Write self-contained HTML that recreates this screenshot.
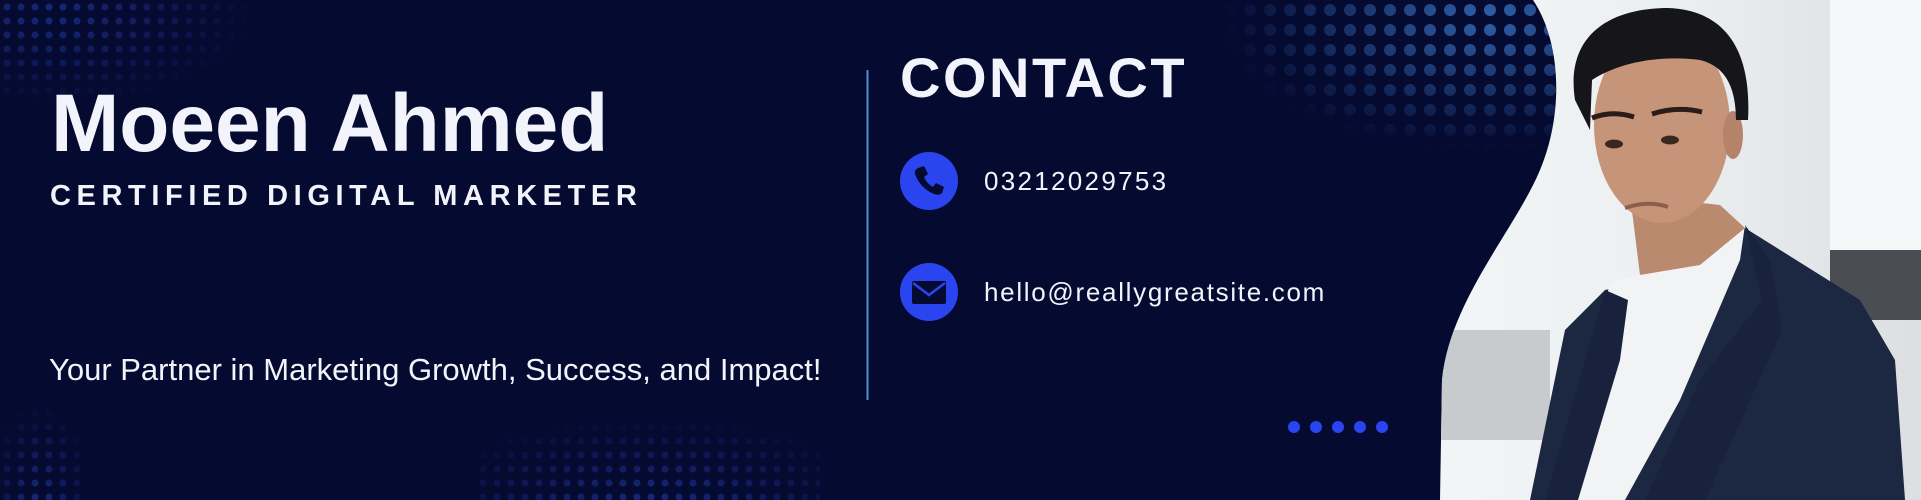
<!DOCTYPE html>
<html><head><meta charset="utf-8"><style>
html,body{margin:0;padding:0}
body{width:1921px;height:500px;overflow:hidden;background:#050a30;position:relative;font-family:"Liberation Sans",sans-serif;color:#f3f4fb}
.abs{position:absolute;white-space:nowrap}
</style></head><body>
<svg class="abs" style="left:0;top:0" width="1921" height="500">
<defs>
<pattern id="dots" width="20" height="20" patternUnits="userSpaceOnUse"><circle cx="10" cy="10" r="6" fill="#2f5fa8"/></pattern>
<pattern id="dots2" width="14" height="14" patternUnits="userSpaceOnUse"><circle cx="7" cy="7" r="3.5" fill="#1a2f8a"/></pattern>
<radialGradient id="g1" cx="0.8" cy="0.1" r="0.75"><stop offset="0" stop-color="#fff"/><stop offset="1" stop-color="#000"/></radialGradient>
<radialGradient id="g2" cx="0.2" cy="0.1" r="0.8"><stop offset="0" stop-color="#fff" stop-opacity="0.8"/><stop offset="1" stop-color="#000"/></radialGradient>
<radialGradient id="g3" cx="0.5" cy="1" r="0.7"><stop offset="0" stop-color="#fff" stop-opacity="0.8"/><stop offset="1" stop-color="#000"/></radialGradient>
<mask id="m1"><rect x="1200" y="0" width="360" height="180" fill="url(#g1)"/></mask>
<mask id="m2"><rect x="0" y="0" width="260" height="120" fill="url(#g2)"/></mask>
<mask id="m3"><rect x="480" y="380" width="340" height="120" fill="url(#g3)"/></mask>
<mask id="m4"><rect x="0" y="360" width="80" height="140" fill="url(#g3)"/></mask>
<linearGradient id="bg" x1="0" y1="0" x2="1" y2="0"><stop offset="0" stop-color="#f3f5f6"/><stop offset="0.5" stop-color="#eceff1"/><stop offset="1" stop-color="#dcdfe1"/></linearGradient>
<clipPath id="wave"><path d="M1533 0 C1560 40 1565 110 1540 170 C1515 230 1450 300 1442 380 L1440 500 L1921 500 L1921 0 Z"/></clipPath>
</defs>
<rect x="1200" y="0" width="360" height="180" fill="url(#dots)" mask="url(#m1)"/>
<rect x="0" y="0" width="260" height="120" fill="url(#dots2)" mask="url(#m2)"/>
<rect x="480" y="380" width="340" height="120" fill="url(#dots2)" mask="url(#m3)"/>
<rect x="0" y="360" width="80" height="140" fill="url(#dots2)" mask="url(#m4)"/>
<g clip-path="url(#wave)">
<rect x="1420" y="0" width="501" height="500" fill="url(#bg)"/>
<rect x="1830" y="0" width="91" height="250" fill="#f6f7f8"/>
<rect x="1830" y="250" width="91" height="70" fill="#4a4d52"/>
<rect x="1440" y="330" width="110" height="110" fill="#c8cbce"/>
<path d="M1605 290 L1565 330 L1530 500 L1905 500 L1895 360 L1860 300 L1745 228 L1700 270 Z" fill="#1c2742"/>
<path d="M1610 282 L1640 275 L1745 225 L1740 260 L1680 400 L1625 500 L1565 500 L1595 350 Z" fill="#f2f3f5"/>
<path d="M1745 225 L1762 300 L1700 380 L1645 500 L1705 500 L1782 330 L1770 260 Z" fill="#18223c"/>
<path d="M1605 290 L1628 300 L1620 360 L1578 500 L1545 500 Z" fill="#18223c"/>
<path d="M1630 195 L1720 205 L1745 228 L1700 265 L1640 275 Z" fill="#b98a6d"/>
<ellipse cx="1662" cy="125" rx="68" ry="98" fill="#c69479"/>
<ellipse cx="1733" cy="135" rx="10" ry="24" fill="#b5826a"/>
<path d="M1575 100 C1565 35 1610 8 1668 8 C1725 10 1752 50 1748 120 L1736 120 C1736 80 1720 65 1700 60 C1660 55 1620 62 1592 80 L1590 130 Z" fill="#16151a"/>
<path d="M1592 118 Q1612 110 1634 117" stroke="#2a1c17" stroke-width="5" fill="none"/>
<path d="M1652 114 Q1677 106 1702 112" stroke="#2a1c17" stroke-width="5" fill="none"/>
<ellipse cx="1614" cy="144" rx="9" ry="4.5" fill="#3a2720"/>
<ellipse cx="1670" cy="140" rx="9" ry="4.5" fill="#3a2720"/>
<path d="M1625 208 Q1648 200 1668 207" stroke="#8e5d4c" stroke-width="4" fill="none"/>
</g>
<line x1="867.5" y1="70" x2="867.5" y2="400" stroke="#4a8fd8" stroke-width="2"/>
<circle cx="929" cy="181" r="29" fill="#2a45f0"/>
<path d="M918 168 l6 -2 l4 8 l-4 3 q3 7 9 10 l3 -4 l8 4 l-2 6 q-3 3 -8 1 q-14 -6 -19 -20 q-1 -4 3 -6z" fill="#050a30"/>
<circle cx="929" cy="292" r="29" fill="#2a45f0"/>
<rect x="912" y="281" width="34" height="23" rx="2" fill="#050a30"/>
<path d="M913 283 L929 295 L945 283" stroke="#2a45f0" stroke-width="2.5" fill="none"/>
<g fill="#2a45f0"><circle cx="1294" cy="427" r="6"/><circle cx="1316" cy="427" r="6"/><circle cx="1338" cy="427" r="6"/><circle cx="1360" cy="427" r="6"/><circle cx="1382" cy="427" r="6"/></g>
</svg>
<div class="abs" style="left:51px;top:74px;font-size:82px;font-weight:bold;line-height:100px">Moeen Ahmed</div>
<div class="abs" style="left:50px;top:178px;font-size:29px;font-weight:bold;letter-spacing:5.6px;line-height:36px">CERTIFIED DIGITAL MARKETER</div>
<div class="abs" style="left:49px;top:352px;font-size:31px;line-height:36px;letter-spacing:0px">Your Partner in Marketing Growth, Success, and Impact!</div>
<div class="abs" style="left:900px;top:48px;font-size:56px;font-weight:bold;letter-spacing:2.5px;line-height:60px">CONTACT</div>
<div class="abs" style="left:984px;top:166px;font-size:26px;line-height:30px;letter-spacing:2.3px">03212029753</div>
<div class="abs" style="left:984px;top:277px;font-size:26px;line-height:30px;letter-spacing:1.7px">hello@reallygreatsite.com</div>
</body></html>
